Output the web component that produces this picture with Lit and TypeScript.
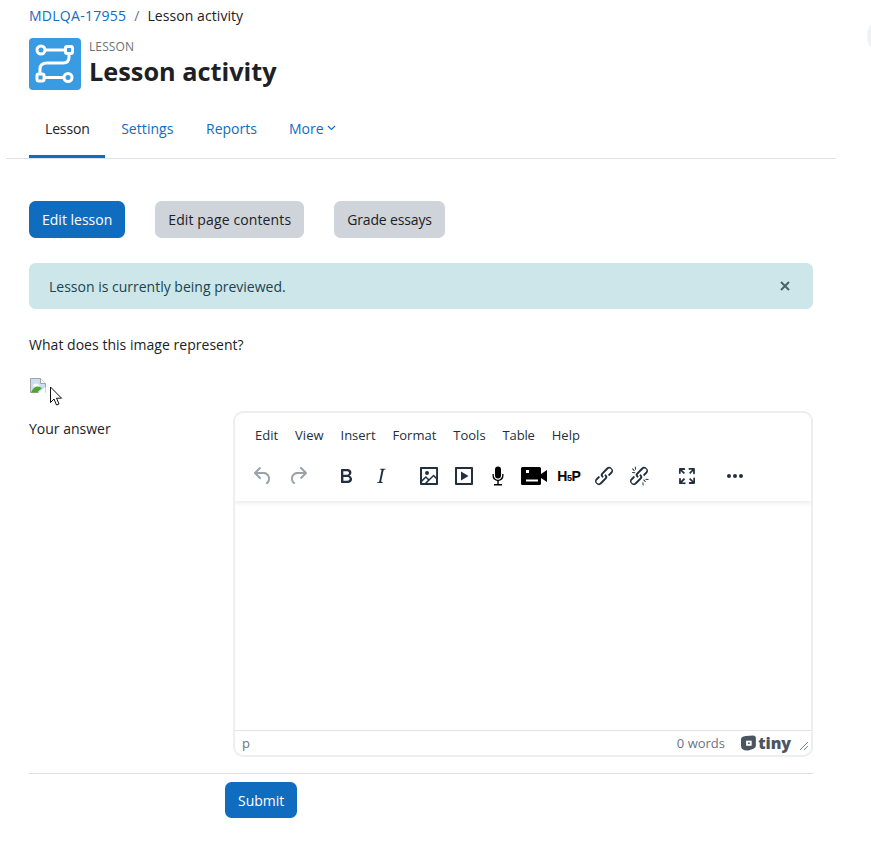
import { LitElement, html, css } from "lit";
import { customElement } from "lit/decorators.js";

const ic = (d: string, cls = "") => html`<svg class="ic ${cls}" viewBox="0 0 24 24" width="24" height="24"><path d=${d}></path></svg>`;
const LINK = "M6.200 12.300a1 1 0 0 1 1.400 1.400l-2 2a2 2 0 1 0 2.600 2.800l4.800-4.800a1 1 0 0 0 0-1.400 1 1 0 1 1 1.400-1.300 2.900 2.900 0 0 1 0 4L9.600 20a3.900 3.900 0 0 1-5.500-5.500l2-2Zm11.600-.6a1 1 0 0 1-1.400-1.400l2-2a2 2 0 1 0-2.600-2.800L11 10.300a1 1 0 0 0 0 1.400A1 1 0 1 1 9.600 13a2.900 2.900 0 0 1 0-4L14.400 4a3.900 3.900 0 0 1 5.500 5.500l-2 2Z";

@customElement("app-root")
export class AppRoot extends LitElement {
  static styles = css`
    :host { display: block; position: relative; width: 871px; height: 844px; overflow: hidden; background: #fff; color: #1d2125; font-family: "Open Sans", sans-serif; font-size: 14px; line-height: 21px; }
    a { color: #0f6cbf; text-decoration: none; }
    main { padding: 0 58px 0 29px; display: flex; flex-direction: column; }
    .crumbs { display: flex; gap: 8px; height: 21px; margin-top: 5px; align-items: center; }
    .crumbs a { letter-spacing: .27px; }
    .crumbs span { letter-spacing: .07px; }
    .crumbs i { font-style: normal; color: #6a737b; }
    .head { display: flex; gap: 8px; margin-top: 12px; align-items: flex-start; }
    .logo { width: 52px; height: 52px; background: #399be2; border-radius: 4px; display: block; flex: none; }
    .eyebrow { font-size: 12px; line-height: 14px; color: #6a737b; margin-top: 2px; letter-spacing: .1px; }
    h1 { margin: 0; font-size: 25.3px; line-height: 36px; font-weight: 700; color: #1d2125; margin-top: -1px; }
    nav { display: flex; margin: 15px -23px 0 -23px; padding-left: 23px; height: 53px; border-bottom: 1px solid #dee2e6; }
    nav a { padding: 0 16px 7px; display: flex; align-items: center; gap: 3px; box-sizing: content-box; height: 46px; }
    nav a.set { padding-right: 16.5px; letter-spacing: .06px; }
    nav a.on { color: #1d2125; border-bottom: 3px solid #0f6cbf; letter-spacing: -.15px; padding-bottom: 4px; padding-right: 15.5px; }
    .btns { display: flex; gap: 30px; margin-top: 42px; }
    .btn { height: 37px; padding: 0 13px; border-radius: 6.5px; display: flex; align-items: center; box-sizing: border-box; white-space: nowrap; }
    .primary { background: #0f6cbf; color: #fff; }
    .sec { background: #ced4da; color: #1d2125; }
    .wide { letter-spacing: .12px; }
    .narrow { letter-spacing: -.15px; }
    .alert { margin-top: 25px; height: 46px; background: #cce6ea; color: #1a4550; border-radius: 6.5px; display: flex; align-items: center; justify-content: space-between; padding: 0 23px 0 20px; }
    .alert svg { display: block; }
    .q { margin-top: 25px; height: 21px; letter-spacing: .03px; }
    .broken { display: block; margin: 23px 0 21px 1px; height: 16px; }
    .cursor { position: absolute; left: 49px; top: 386px; }
    .row { display: flex; }
    .label { width: 204px; flex: none; margin-top: 3px; }
    .editor { flex: 1; margin-top: -4px; height: 346px; box-sizing: border-box; border: 2px solid #eeeeee; border-radius: 10px; display: flex; flex-direction: column; overflow: hidden; }
    .top { box-shadow: 0 2px 4px rgba(34,47,62,.1); height: 88px; flex: none; box-sizing: border-box; padding: 11px 0 0 11px; position: relative; }
    .menus { display: flex; gap: 17px; height: 22px; align-items: center; font-size: 13px; color: #222f3e; padding-left: 9px; }
    .menus .tb { letter-spacing: -.15px; }
    .tools { display: flex; align-items: center; height: 24px; margin-top: 18px; }
    .ic { display: block; fill: #222f3e; flex: none; }
    .ic.dis { fill: #9aa1a9; }
    .ic.blk { fill: #000; }
    .t { flex: none; width: 24px; height: 24px; display: flex; align-items: center; justify-content: center; }
    .h5p { font-family: "Liberation Sans", sans-serif; font-weight: 700; color: #000; line-height: 24px; align-items: baseline; font-size: 14px; }
    .h5p small { font-size: 9px; margin: 0 -.5px; }
    .area { flex: 1; }
    .status { height: 25px; flex: none; border-top: 1px solid #e3e3e3; display: flex; align-items: center; padding: 0 0 0 7px; color: #6b7480; font-size: 13px; box-sizing: border-box; position: relative; }
    .status .p { flex: 1; }
    .tiny { display: flex; align-items: center; gap: 2.5px; margin-left: 16px; font-weight: 800; font-size: 16px; color: #4b5560; width: 50px; letter-spacing: -.1px; }
    .grip { display: block; margin: 5px 2px 0 8px; }
    hr { border: 0; border-top: 1px solid #dee2e6; margin: 16px 0 0; }
    .submit { align-self: flex-start; margin: 8px 0 0 196px; height: 36px; }
    .blob { position: absolute; left: 867px; top: 18px; width: 30px; height: 36px; border-radius: 50%; background: #f0f1f3; }
  `;

  render() {
    return html`
      <main>
        <div class="crumbs"><a href="#">MDLQA-17955</a><i>/</i><span>Lesson activity</span></div>
        <div class="head">
          <svg class="logo" viewBox="0 0 52 52" fill="none" stroke="#fff" stroke-width="3">
            <circle cx="12" cy="12" r="4"></circle>
            <rect x="36.500" y="8.500" width="7" height="7" rx="1.500"></rect>
            <path d="M16 12h20.500M40 15.500v3.500q0 6-6 6H18q-7 0-7 6v5"></path>
            <rect x="8" y="36" width="7" height="7" rx="1.500"></rect>
            <circle cx="39" cy="39.500" r="4"></circle>
            <path d="M15 39.500h20"></path>
          </svg>
          <div><div class="eyebrow">LESSON</div><h1>Lesson activity</h1></div>
        </div>
        <nav>
          <a class="on" href="#">Lesson</a><a class="set" href="#">Settings</a><a href="#">Reports</a>
          <a href="#">More <svg width="9" height="6" viewBox="0 0 9 6" fill="none" stroke="#0f6cbf" stroke-width="1.100"><path d="M1 1l3.500 3.500L8 1"></path></svg></a>
        </nav>
        <div class="btns">
          <a class="btn primary" href="#">Edit lesson</a>
          <a class="btn sec wide" href="#">Edit page contents</a>
          <a class="btn sec narrow" href="#">Grade essays</a>
        </div>
        <div class="alert"><span>Lesson is currently being previewed.</span>
          <svg width="10" height="10" viewBox="0 0 10 10" stroke="#4c6369" stroke-width="2"><path d="M1 1l8 8M9 1l-8 8"></path></svg></div>
        <div class="q">What does this image represent?</div>
        <svg class="broken" width="16" height="16" viewBox="0 0 16 16">
          <path d="M.5.5h10l5 5v9H.5z" fill="#c9dff0" stroke="#a5a5a5"></path>
          <path d="M10.500.5v5h5" fill="#fff" stroke="#a5a5a5"></path>
          <path d="M3 7q2-2.500 5-1 2 1 .5 2.500H4q-2 0-1-1.500Z" fill="#fff"></path>
          <path d="M1 14.500q2-5 6-6 3 0 5 1.500l-5 4.500z" fill="#4ea52e"></path>
          <path d="M7.500 15.500l8-6.500v6.500z" fill="#fff"></path>
        </svg>
        <div class="row">
          <div class="label">Your answer</div>
          <div class="editor">
            <div class="top">
              <div class="menus"><span>Edit</span><span>View</span><span>Insert</span><span>Format</span><span>Tools</span><span class="tb">Table</span><span>Help</span></div>
              <div class="tools">
                <span class="t" style="margin-left:5px">${ic("M6.400 8H12c3.700 0 6.200 2 6.800 5.100.6 2.700-.4 5.600-2.300 6.800a1 1 0 0 1-1-1.800c1.100-.6 1.800-2.700 1.400-4.600-.5-2.100-2.100-3.500-4.900-3.500H6.400l3.300 3.300a1 1 0 1 1-1.400 1.400l-5-5a1 1 0 0 1 0-1.400l5-5a1 1 0 0 1 1.400 1.400L6.400 8Z", "dis")}</span>
                <span class="t" style="margin-left:11px">${ic("M17.600 10H12c-2.800 0-4.400 1.400-4.900 3.500-.4 2 .3 4 1.400 4.600a1 1 0 1 1-1 1.800c-2-1.200-2.900-4.100-2.300-6.800.6-3 3-5.100 6.800-5.100h5.600l-3.300-3.300a1 1 0 1 1 1.400-1.400l5 5a1 1 0 0 1 0 1.400l-5 5a1 1 0 0 1-1.400-1.400l3.300-3.300Z", "dis")}</span>
                <span class="t" style="margin-left:24px">${ic("M7.800 19c-.3 0-.5 0-.6-.2l-.2-.5V5.700c0-.2 0-.4.2-.5l.6-.2h5c1.500 0 2.700.3 3.500 1 .7.6 1.100 1.400 1.100 2.500a3 3 0 0 1-.6 1.900c-.4.6-1 1-1.600 1.200.4.1.9.3 1.300.6s.8.7 1 1.200c.4.4.5 1 .5 1.600 0 1.300-.4 2.300-1.300 3-.8.7-2.100 1-3.800 1H7.800Zm5-8.300c.6 0 1.200-.1 1.600-.5.4-.3.6-.7.6-1.300 0-1.100-.8-1.700-2.300-1.700H9.300v3.500h3.400Zm.5 6c.7 0 1.300-.1 1.700-.4.4-.4.6-.9.6-1.500s-.2-1-.7-1.400c-.4-.3-1-.4-2-.4H9.400v3.800h4Z")}</span>
                <span class="t" style="margin-left:11px">${ic("M16.700 4.700l-.1.9h-.3c-.6 0-1 0-1.400.3-.3.3-.4.6-.5 1.100l-2.100 9.800v.6c0 .5.4.8 1.400.8h.2l-.2.8H8l.2-.8h.2c1.100 0 1.800-.5 2-1.500l2-9.800.1-.5c0-.6-.4-.8-1.400-.8h-.3l.2-.9h5.800Z")}</span>
                <span class="t" style="margin-left:24px">${ic("m5 15.700 3.300-3.200c.3-.3.7-.3 1 0L12 15l4.100-4c.3-.4.8-.4 1 0l2 1.900V5H5v10.700ZM5 18V19h3l2.800-2.900-2-2L5 17.900Zm14-3-2.500-2.400-6.400 6.500H19v-4ZM4 3h16c.6 0 1 .4 1 1v16c0 .6-.4 1-1 1H4a1 1 0 0 1-1-1V4c0-.6.4-1 1-1Zm6 8a2 2 0 1 0 0-4 2 2 0 0 0 0 4Z")}</span>
                <span class="t" style="margin-left:11px">${ic("M4 3h16c.6 0 1 .4 1 1v16c0 .6-.4 1-1 1H4a1 1 0 0 1-1-1V4c0-.6.4-1 1-1Zm1 2v14h14V5H5Zm4 2.500 7.500 4.500-7.500 4.500v-9Z")}</span>
                <span class="t" style="margin-left:10px">${ic("M12 2.500a3 3 0 0 1 3 3v6a3 3 0 0 1-6 0v-6a3 3 0 0 1 3-3ZM6.500 10h1.300v1.500a4.200 4.200 0 0 0 8.400 0V10h1.300v1.500a5.500 5.500 0 0 1-4.800 5.400V20H16v1.500H8V20h3.300v-3.100a5.500 5.500 0 0 1-4.800-5.400V10Z", "blk")}</span>
                <span class="t" style="margin-left:11px;width:26px"><svg class="ic blk" viewBox="0 0 26 18" width="26" height="18"><path d="M1.500 0h17A1.500 1.500 0 0 1 20 1.500v15a1.500 1.500 0 0 1-1.500 1.500h-17A1.500 1.500 0 0 1 0 16.500v-15A1.500 1.500 0 0 1 1.500 0ZM5 3H8v3H5V3Zm0 9.500v2h12v-2H5ZM20 7l6-4v12l-6-4V7Z" fill-rule="evenodd"></path></svg></span>
                <span class="t h5p" style="margin-left:10px">H<small>5</small>P</span>
                <span class="t" style="margin-left:11px">${ic(LINK)}</span>
                <span class="t" style="margin-left:11px"><svg class="ic" viewBox="0 0 24 24" width="24" height="24"><path d=${LINK}></path><path d="M7.600 6.300a.5.5 0 0 1-.7.7L5.300 5.300a.5.5 0 1 1 .7-.7l1.600 1.700ZM18.700 17.200a.5.500 0 0 1-.7.7l-1.600-1.700a.5.500 0 0 1 .7-.7l1.600 1.700ZM9 5.200a.5.500 0 1 1-1 .1L7.800 3a.5.500 0 0 1 1-.1L9 5.200ZM15.400 18.700a.5.500 0 1 1 1-.1l.2 2.300a.5.500 0 1 1-1 .1l-.2-2.300ZM5.500 9a.5.500 0 0 1 .1-1l2.300.2a.5.500 0 0 1-.1 1L5.500 9ZM18.800 15.700a.5.500 0 1 1 .1-1l2.300.2a.5.500 0 0 1-.1 1l-2.300-.2Z"></path></svg></span>
                <span class="t" style="margin-left:24px">${ic("m15.300 10-1.200-1.300 2.900-3h-2.300a.9.9 0 1 1 0-1.700H19c.5 0 .9.4.9.9v4.400a.9.9 0 1 1-1.800 0V7l-2.900 3Zm0 4 3 3v-2.300a.9.9 0 1 1 1.700 0V19c0 .5-.4.9-.9.9h-4.400a.9.9 0 1 1 0-1.800H17l-3-2.900 1.300-1.200ZM10 15.400l-2.900 3h2.300a.9.9 0 1 1 0 1.700H5a.9.9 0 0 1-.9-.9v-4.400a.9.9 0 1 1 1.800 0V17l2.900-3 1.200 1.300ZM8.700 10 5.700 7v2.300a.9.9 0 0 1-1.700 0V5c0-.5.4-.9.9-.9h4.400a.9.9 0 0 1 0 1.800H7l3 2.900-1.300 1.200Z")}</span>
                <span class="t" style="margin-left:24px">${ic("M6 10a2 2 0 0 0-2 2c0 1.100.9 2 2 2a2 2 0 0 0 2-2 2 2 0 0 0-2-2Zm12 0a2 2 0 0 0-2 2c0 1.100.9 2 2 2a2 2 0 0 0 2-2 2 2 0 0 0-2-2Zm-6 0a2 2 0 0 0-2 2c0 1.100.9 2 2 2a2 2 0 0 0 2-2 2 2 0 0 0-2-2Z")}</span>
              </div>
            </div>
            <div class="area"></div>
            <div class="status">
              <span class="p">p</span><span>0 words</span>
              <span class="tiny"><svg width="16" height="16" viewBox="0 0 16 16"><path d="M5 .5 13 0q3 0 3 3v8q0 2-2 3l-6 2q-8 .5-8-5V4Q0 1 5 .5Z" fill="#4b5560"></path><path d="M5.500 5.500h6v5.500h-6Z" fill="#fff"></path><path d="M7.500 7.500h2v1.500h-2Z" fill="#4b5560"></path></svg>tiny</span>
              <svg class="grip" width="10" height="10" viewBox="0 0 10 10" stroke="#7a8088" fill="none"><path d="M1 9l8-8M5 9l4-4"></path></svg>
            </div>
          </div>
        </div>
        <hr />
        <a class="btn primary submit" href="#">Submit</a>
      </main>
      <svg class="cursor" width="15" height="21" viewBox="0 0 15 21"><path d="M1.500 1v15.500l3.500-3.500 2.500 6 2.500-1-2.500-5.800h5z" fill="#fff" stroke="#111" stroke-width="1"></path></svg>
      <div class="blob"></div>
    `;
  }
}
